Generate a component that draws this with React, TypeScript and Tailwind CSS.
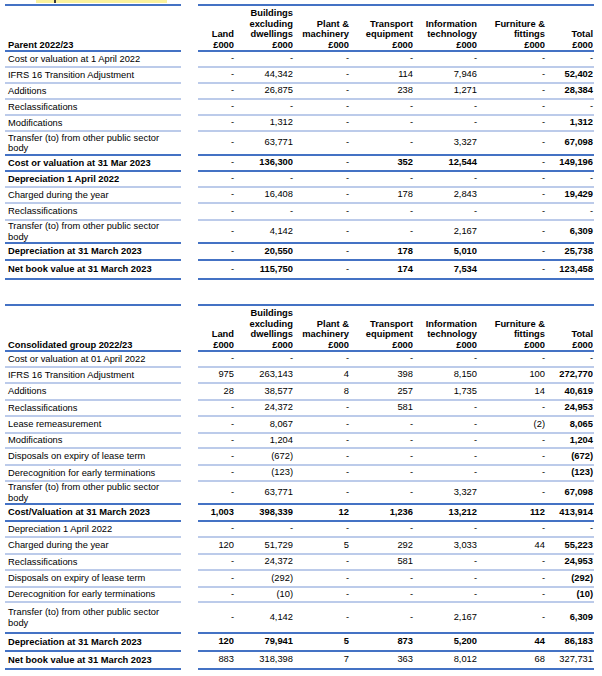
import React from "react";

type RowData = {
  label: React.ReactNode;
  vals: string[];
  h: string;
  dark?: boolean;
  bold?: boolean;
  valsBold?: boolean;
  totalRegular?: boolean;
};

const widths = ["w-[37px]", "w-[59px]", "w-[56px]", "w-[64px]", "w-[64px]", "w-[68px]", "w-[48px]"];

const heads: React.ReactNode[] = [
  <>Land<br />£000</>,
  <>Buildings<br />excluding<br />dwellings<br />£000</>,
  <>Plant &amp;<br />machinery<br />£000</>,
  <>Transport<br />equipment<br />£000</>,
  <>Information<br />technology<br />£000</>,
  <>Furniture &amp;<br />fittings<br />£000</>,
  <>Total<br />£000</>,
];

const D = ["-", "-", "-", "-", "-", "-", "-"];
const transfer = <>Transfer (to) from other public sector<br />body</>;

const parentRows: RowData[] = [
  { label: "Cost or valuation at 1 April 2022", vals: D, h: "h-[16px]" },
  { label: "IFRS 16 Transition Adjustment", vals: ["-", "44,342", "-", "114", "7,946", "-", "52,402"], h: "h-[16px]" },
  { label: "Additions", vals: ["-", "26,875", "-", "238", "1,271", "-", "28,384"], h: "h-[16px]" },
  { label: "Reclassifications", vals: D, h: "h-[16px]" },
  { label: "Modifications", vals: ["-", "1,312", "-", "-", "-", "-", "1,312"], h: "h-[16px]" },
  { label: transfer, vals: ["-", "63,771", "-", "-", "3,327", "-", "67,098"], h: "h-[24px]", dark: true },
  { label: "Cost or valuation at 31 Mar 2023", vals: ["-", "136,300", "-", "352", "12,544", "-", "149,196"], h: "h-[16px]", dark: true, bold: true, valsBold: true },
  { label: "Depreciation 1 April 2022", vals: D, h: "h-[16px]", bold: true },
  { label: "Charged during the year", vals: ["-", "16,408", "-", "178", "2,843", "-", "19,429"], h: "h-[16px]" },
  { label: "Reclassifications", vals: D, h: "h-[17px]" },
  { label: transfer, vals: ["-", "4,142", "-", "-", "2,167", "-", "6,309"], h: "h-[23px]", dark: true },
  { label: "Depreciation at 31 March 2023", vals: ["-", "20,550", "-", "178", "5,010", "-", "25,738"], h: "h-[17px]", dark: true, bold: true, valsBold: true },
  { label: "Net book value at 31 March 2023", vals: ["-", "115,750", "-", "174", "7,534", "-", "123,458"], h: "h-[19px]", dark: true, bold: true, valsBold: true },
];

const groupRows: RowData[] = [
  { label: "Cost or valuation at 01 April 2022", vals: D, h: "h-[16px]" },
  { label: "IFRS 16 Transition Adjustment", vals: ["975", "263,143", "4", "398", "8,150", "100", "272,770"], h: "h-[16px]" },
  { label: "Additions", vals: ["28", "38,577", "8", "257", "1,735", "14", "40,619"], h: "h-[17px]" },
  { label: "Reclassifications", vals: ["-", "24,372", "-", "581", "-", "-", "24,953"], h: "h-[16px]" },
  { label: "Lease remeasurement", vals: ["-", "8,067", "-", "-", "-", "(2)", "8,065"], h: "h-[17px]" },
  { label: "Modifications", vals: ["-", "1,204", "-", "-", "-", "-", "1,204"], h: "h-[15px]" },
  { label: "Disposals on expiry of lease term", vals: ["-", "(672)", "-", "-", "-", "-", "(672)"], h: "h-[17px]" },
  { label: "Derecognition for early terminations", vals: ["-", "(123)", "-", "-", "-", "-", "(123)"], h: "h-[16px]" },
  { label: transfer, vals: ["-", "63,771", "-", "-", "3,327", "-", "67,098"], h: "h-[23px]", dark: true },
  { label: "Cost/Valuation at 31 March 2023", vals: ["1,003", "398,339", "12", "1,236", "13,212", "112", "413,914"], h: "h-[17px]", dark: true, bold: true, valsBold: true },
  { label: "Depreciation 1 April 2022", vals: D, h: "h-[16px]" },
  { label: "Charged during the year", vals: ["120", "51,729", "5", "292", "3,033", "44", "55,223"], h: "h-[17px]" },
  { label: "Reclassifications", vals: ["-", "24,372", "-", "581", "-", "-", "24,953"], h: "h-[16px]" },
  { label: "Disposals on expiry of lease term", vals: ["-", "(292)", "-", "-", "-", "-", "(292)"], h: "h-[17px]" },
  { label: "Derecognition for early terminations", vals: ["-", "(10)", "-", "-", "-", "-", "(10)"], h: "h-[15px]" },
  { label: transfer, vals: ["-", "4,142", "-", "-", "2,167", "-", "6,309"], h: "h-[31px]", dark: true },
  { label: "Depreciation at 31 March 2023", vals: ["120", "79,941", "5", "873", "5,200", "44", "86,183"], h: "h-[18px]", dark: true, bold: true, valsBold: true },
  { label: "Net book value at 31 March 2023", vals: ["883", "318,398", "7", "363", "8,012", "68", "327,731"], h: "h-[18px]", dark: true, bold: true, totalRegular: true },
];

function Row({ r }: { r: RowData }) {
  const b = r.dark ? "border-b-2 border-[#4472c4]" : "border-b-2 border-[#bccbea]";
  return (
    <div className={`flex ${r.h}`}>
      <div className={`w-[176px] shrink-0 flex items-center pl-[3px] leading-[10.5px] ${b} ${r.bold ? "font-bold" : ""}`}>
        <span>{r.label}</span>
      </div>
      <div className="w-[17px] shrink-0" />
      <div className={`w-[396px] shrink-0 flex ${b}`}>
        {r.vals.map((v, i) => {
          const isTotal = i === 6;
          const bold = v !== "-" && (r.valsBold || (isTotal && !r.totalRegular));
          return (
            <div key={i} className={`${widths[i]} shrink-0 flex items-center justify-end pr-[1px] ${bold ? "font-bold" : ""}`}>
              {v}
            </div>
          );
        })}
      </div>
    </div>
  );
}

function Table({ title, rows }: { title: string; rows: RowData[] }) {
  return (
    <div className="flex flex-col">
      <div className="flex h-[48px]">
        <div className="w-[176px] shrink-0 flex items-end pl-[3px] font-bold border-y-2 border-[#4472c4] leading-[10.4px]">
          {title}
        </div>
        <div className="w-[17px] shrink-0" />
        <div className="w-[396px] shrink-0 flex border-y-2 border-[#4472c4]">
          {heads.map((h, i) => (
            <div key={i} className={`${widths[i]} shrink-0 flex items-end justify-end text-right font-bold pr-[1px] leading-[10.4px] whitespace-nowrap`}>
              <span>{h}</span>
            </div>
          ))}
        </div>
      </div>
      {rows.map((r, i) => (
        <Row key={i} r={r} />
      ))}
    </div>
  );
}

export default function App() {
  return (
    <div className="w-[602px] h-[676px] overflow-hidden bg-white text-black text-[9.33px] font-['Liberation_Sans',Arial,sans-serif] pl-[5px]">
      <div className="flex h-[3px] ml-[31px] w-[131px] bg-[#fbf29c] mb-[1px]">
        <div className="ml-[18px] w-[2px] h-[3px] bg-[#3a3a3a]" />
      </div>
      <Table title="Parent 2022/23" rows={parentRows} />
      <div className="h-[24px]" />
      <Table title="Consolidated group 2022/23" rows={groupRows} />
    </div>
  );
}
